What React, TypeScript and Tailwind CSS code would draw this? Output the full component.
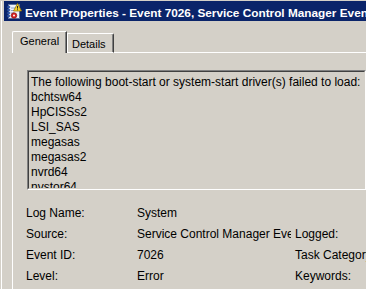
const lines = [
  "The following boot-start or system-start driver(s) failed to load:",
  "bchtsw64",
  "HpCISSs2",
  "LSI_SAS",
  "megasas",
  "megasas2",
  "nvrd64",
  "nvstor64",
];

const fields = [
  { label: "Log Name:", value: "System", extra: "" },
  { label: "Source:", value: "Service Control Manager Eve", extra: "Logged:" },
  { label: "Event ID:", value: "7026", extra: "Task Category:" },
  { label: "Level:", value: "Error", extra: "Keywords:" },
];

function EventIcon() {
  return (
    <svg width="16" height="16" viewBox="0 0 16 16" className="mt-[2px] ml-px shrink-0">
      <rect x="2.5" y="1.5" width="11" height="14" fill="#eef2fa" stroke="#5a6f9c" />
      <path d="M5 5h6M5 7.5h6M5 10h3" stroke="#8aa0c8" strokeWidth="1" />
      {[3, 6, 9, 12].map((y) => (
        <rect key={y} x="1" y={y} width="3" height="2" rx="1" fill="#2f5cb8" stroke="#1d3a7a" strokeWidth="0.5" />
      ))}
      <path d="M11.5 0.5 L15.5 8 L7.5 8 Z" fill="#f5d22b" stroke="#9a7a08" strokeWidth="0.8" />
      <path d="M11.5 3v2.6M11.5 6.4v0.8" stroke="#222" strokeWidth="1" />
      <circle cx="8" cy="12.5" r="2.8" fill="#d42020" stroke="#8a0e0e" strokeWidth="0.6" />
      <circle cx="8" cy="12.5" r="1" fill="#fff" />
    </svg>
  );
}

export default function App() {
  return (
    <div className="h-[289px] w-[366px] overflow-hidden bg-[#d4d0c8] pt-px font-['Liberation_Sans',Arial,sans-serif] text-black">
      <div className="ml-px h-[288px] overflow-hidden border-l border-white pl-[2px]">
        {/* title bar */}
        <div className="flex h-[20px] items-start gap-[3px] overflow-hidden bg-[#0a246a] pl-px">
          <EventIcon />
          <span className="mt-[5px] whitespace-nowrap text-[11.8px] leading-[14px] font-bold text-white">
            Event Properties - Event 7026, Service Control Manager Even
          </span>
        </div>

        {/* tabs */}
        <div className="ml-[8px] mt-[10px] flex h-[22px] items-end text-[11px] leading-[14px]">
          <div className="h-[22px] w-[55px] shrink-0 rounded-tl-[2px] border-l border-t border-r border-white border-r-[#404040] pl-[7px] pt-[2px] shadow-[inset_-1px_0_#808080]">
            General
          </div>
          <div className="h-[20px] w-[47px] shrink-0 rounded-tr-[2px] border border-white border-r-[#404040] pl-[4px] pt-[3px] shadow-[inset_-1px_0_#808080]">
            Details
          </div>
          <div className="h-px flex-1 bg-white" />
        </div>

        {/* panel */}
        <div className="ml-[8px] h-[235px] border-l border-white pl-[13px] text-[12px]">
          <div className="ml-px mt-[17px] h-[120px] border border-[#808080] border-b-white border-r-white">
            <div className="h-full overflow-hidden border border-[#404040] border-b-[#d4d0c8] border-r-[#d4d0c8] pl-[2px] pt-[3px] leading-[15px]">
              {lines.map((l) => (
                <div key={l} className="whitespace-nowrap">
                  {l}
                </div>
              ))}
            </div>
          </div>

          <div className="mt-[16px]">
            {fields.map((f) => (
              <div key={f.label} className="flex h-[21px] items-start whitespace-nowrap leading-[14px]">
                <div className="w-[111px] shrink-0">{f.label}</div>
                <div className="w-[154px] shrink-0 overflow-hidden">{f.value}</div>
                <div className="ml-[4px] shrink-0">{f.extra}</div>
              </div>
            ))}
          </div>
        </div>
      </div>
    </div>
  );
}
